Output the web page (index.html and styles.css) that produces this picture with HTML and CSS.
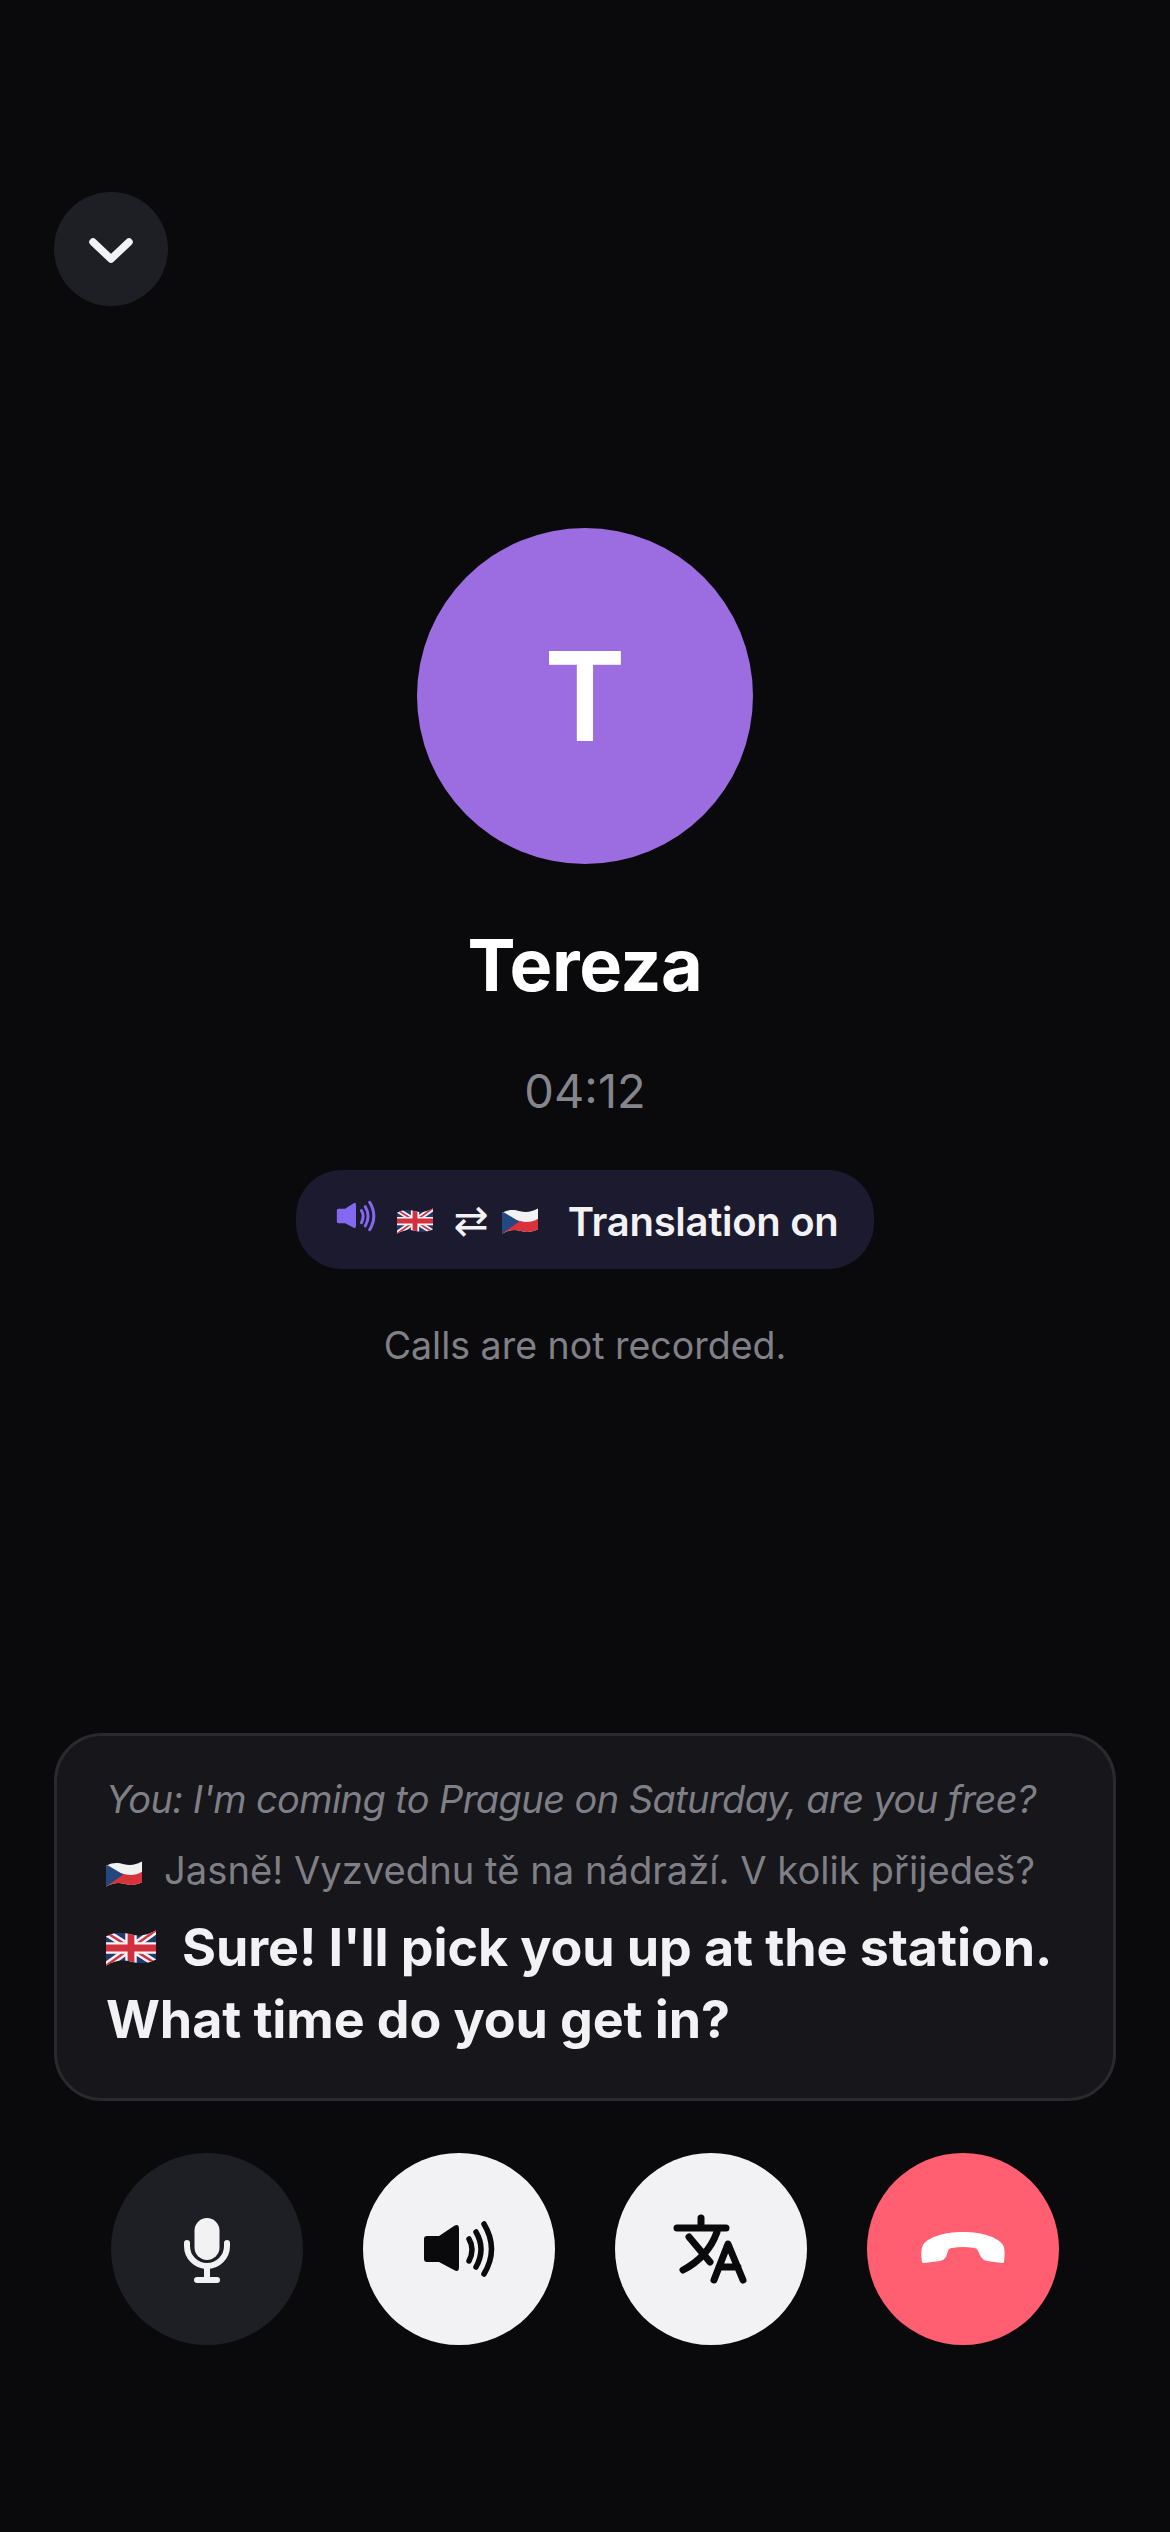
FILE: index.html
```html
<!DOCTYPE html>
<html lang="en">
  <head>
    <meta charset="UTF-8" />
    <meta name="viewport" content="width=device-width, initial-scale=1.0" />
    <title>Call with Tereza</title>
    <link rel="stylesheet" href="styles.css">
  </head>
  <body>
    <svg class="sprite" aria-hidden="true">
      <defs>
        <clipPath id="flagWave">
          <path d="M0 6C10 1 16 2 24 4S40 5 48 0V28C38 33 32 32 24 30S8 29 0 34Z" />
        </clipPath>
        <symbol id="flagUk" viewBox="0 0 48 34">
          <g clip-path="url(#flagWave)">
            <rect width="48" height="34" fill="#25376f" />
            <path d="M0 2L48 32M48 0L0 34" stroke="#f4f4f6" stroke-width="7" />
            <path d="M0 2L48 32M48 0L0 34" stroke="#d3303f" stroke-width="2.4" />
            <path d="M24 0V34M0 17H48" stroke="#f4f4f6" stroke-width="11" />
            <path d="M24 0V34M0 17H48" stroke="#d3303f" stroke-width="6.5" />
          </g>
        </symbol>
        <symbol id="flagCz" viewBox="0 0 48 34">
          <g clip-path="url(#flagWave)">
            <rect width="48" height="34" fill="#f2f2f2" />
            <path d="M0 20C10 15 16 15 24 17S40 19 48 14V34H0Z" fill="#d8333a" />
            <path d="M0 4L23 17.500L0 34Z" fill="#24477f" />
          </g>
        </symbol>
        <symbol id="iconSpeaker" viewBox="0 0 80 62">
          <path d="M8 18H20L35 8Q40 5 40 11V49Q40 55 35 52L20 44H8Q5 44 5 41V21Q5 18 8 18Z" fill="currentColor" />
          <path d="M50 21Q56 31 50 43M57 14Q67 31 57 49M65 6Q80 31 65 56" fill="none" stroke="currentColor" stroke-width="5.500" stroke-linecap="round" />
        </symbol>
      </defs>
    </svg>

    <button class="back-btn">
      <svg width="48" height="30" viewBox="0 0 48 30">
        <path d="M6 8L24 25L42 8" fill="none" stroke="#f2f2f5" stroke-width="7.500" stroke-linecap="round" stroke-linejoin="round" />
      </svg>
    </button>

    <div class="contact">
      <div class="avatar">T</div>
      <h1 class="name">Tereza</h1>
      <div class="timer">04:12</div>
      <div class="status-pill">
        <svg class="pill-speaker"><use href="#iconSpeaker" /></svg>
        <svg class="pill-flag"><use href="#flagUk" /></svg>
        <span class="swap">⇄</span>
        <svg class="pill-flag"><use href="#flagCz" /></svg>
        <span class="pill-label">Translation on</span>
      </div>
      <div class="notice">Calls are not recorded.</div>
    </div>

    <div class="transcript">
      <p class="line-you">You: I'm coming to Prague on Saturday, are you free?</p>
      <p class="line-original"><svg class="flag-small"><use href="#flagCz" /></svg>Jasně! Vyzvednu tě na nádraží. V kolik přijedeš?</p>
      <p class="line-translated"><svg class="flag-large"><use href="#flagUk" /></svg>Sure! I'll pick you up at the station. What time do you get in?</p>
    </div>

    <div class="actions">
      <button class="action-btn dark">
        <svg width="60" height="72" viewBox="0 0 60 72">
          <rect x="17.500" y="5" width="25" height="42" rx="12.500" fill="#f2f2f5" />
          <path d="M10 30V33A20 20 0 0 0 50 33V30M30 53V66" fill="none" stroke="#f2f2f5" stroke-width="6" stroke-linecap="round" />
          <rect x="17" y="64" width="26" height="6" rx="3" fill="#f2f2f5" />
        </svg>
      </button>
      <button class="action-btn light">
        <svg class="btn-speaker"><use href="#iconSpeaker" /></svg>
      </button>
      <button class="action-btn light">
        <svg width="80" height="72" viewBox="0 0 80 72">
          <path d="M6 15H55M30 5V15M18 24L39 49M46 19Q37 44 12 57M43 67L57 31L72 67M48 54H67" fill="none" stroke="#0a0a0d" stroke-width="7" stroke-linecap="round" stroke-linejoin="round" />
        </svg>
      </button>
      <button class="action-btn red">
        <svg width="92" height="40" viewBox="0 0 92 40">
          <path d="M46 3C66 3 82 9 86 16C88 20 88 26 87 33Q87 34 85 34L70 32Q66 31 64 28L61 22Q60 19 57 19Q46 17 35 19Q32 19 31 22L29 28Q27 31 23 32L7 34Q5 34 5 33C4 26 4 20 6 16C10 9 26 3 46 3Z" fill="#fff" />
        </svg>
      </button>
    </div>
  </body>
</html>
```

FILE: styles.css
```css
* {
  margin: 0;
  padding: 0;
  box-sizing: border-box;
}

body {
  width: 1170px;
  height: 2532px;
  display: flex;
  flex-direction: column;
  font-family: Inter, "Noto Sans", sans-serif;
  background: #0a0a0d;
  color: #f2f2f5;
  overflow: hidden;
}

.sprite {
  position: absolute;
  width: 0;
  height: 0;
}

button {
  border: none;
  display: flex;
  align-items: center;
  justify-content: center;
  border-radius: 50%;
  cursor: pointer;
}

.back-btn {
  width: 114px;
  height: 114px;
  margin: 192px 0 0 54px;
  background: #1e1f24;
}

.contact {
  display: flex;
  flex-direction: column;
  align-items: center;
  margin-top: 222px;
}

.avatar {
  width: 336px;
  height: 336px;
  border-radius: 50%;
  display: flex;
  align-items: center;
  justify-content: center;
  background: #9b6de0;
  color: #fff;
  font-size: 124px;
  font-weight: 600;
}

.name {
  margin-top: 58px;
  font-size: 72px;
  line-height: 86px;
  font-weight: 700;
  letter-spacing: -0.4px;
  color: #fff;
}

.timer {
  margin-top: 57px;
  font-size: 47px;
  line-height: 52px;
  color: #85858c;
}

.status-pill {
  display: flex;
  align-items: center;
  height: 99px;
  margin-top: 53px;
  padding: 0 36px 0 38px;
  border-radius: 46px;
  background: #1c1a2e;
}

.pill-speaker {
  width: 44px;
  height: 34px;
  margin: -8px 19px 0 0;
  color: #8568f0;
}

.pill-flag {
  width: 36px;
  height: 26px;
  margin-top: 3px;
}

.swap {
  margin: 3px 13px 0 21px;
  font-family: "DejaVu Sans", sans-serif;
  font-size: 42px;
  line-height: 1;
  color: #f2f2f5;
}

.pill-label {
  margin: 4px 0 0 30px;
  font-size: 40px;
  font-weight: 600;
  letter-spacing: -0.3px;
}

.notice {
  margin-top: 55px;
  font-size: 37.500px;
  line-height: 44px;
  color: #808086;
}

.transcript {
  width: 1062px;
  height: 368px;
  margin: auto 0 0 54px;
  padding: 41px 49px 0;
  border: 3px solid #2a2a2e;
  border-radius: 48px;
  background: #16161b;
}

.line-you {
  font-size: 38px;
  line-height: 44px;
  font-style: italic;
  letter-spacing: -0.6px;
  color: #7f7f86;
  white-space: nowrap;
}

.line-original {
  margin-top: 27px;
  font-size: 38.200px;
  line-height: 44px;
  color: #7f7f86;
  white-space: nowrap;
}

.flag-small {
  width: 36px;
  height: 26px;
  margin-right: 22px;
  vertical-align: -3px;
}

.line-translated {
  margin-top: 20px;
  font-size: 52px;
  line-height: 72px;
  font-weight: 700;
  letter-spacing: -0.1px;
}

.flag-large {
  width: 50px;
  height: 36px;
  margin-right: 26px;
}

.actions {
  display: flex;
  justify-content: center;
  gap: 60px;
  margin: 52px 0 187px;
}

.action-btn {
  width: 192px;
  height: 192px;
}

.action-btn.dark {
  background: #1e1f24;
}

.action-btn.light {
  background: #f2f2f5;
  color: #0a0a0d;
}

.action-btn.red {
  background: #ff5f71;
}

.btn-speaker {
  width: 80px;
  height: 62px;
}
```
